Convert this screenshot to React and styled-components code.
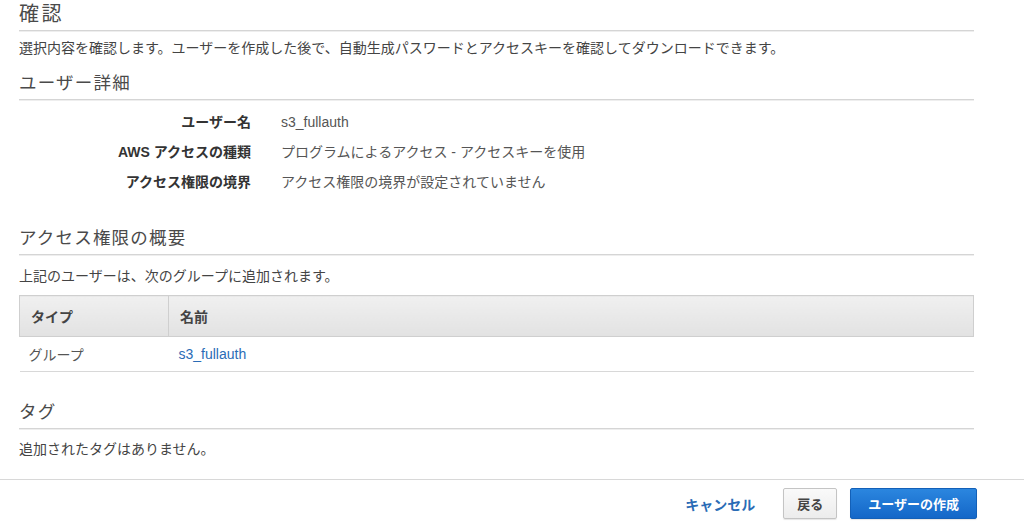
import React from "react";
import styled, { createGlobalStyle } from "styled-components";

const Global = createGlobalStyle`
  html, body { margin: 0; padding: 0; background: #fff; }
  body { font-family: "Liberation Sans", Arial, "Noto Sans CJK JP", sans-serif; color: #444; }
  * { box-sizing: border-box; }
`;

const Page = styled.div`
  width: 1024px;
  height: 525px;
  overflow: hidden;
  display: flex;
  flex-direction: column;
`;

const Content = styled.div`
  width: 974px;
  padding-left: 19px;
  display: flex;
  flex-direction: column;
`;

const Heading = styled.h2`
  margin: 0;
  font-weight: 400;
  font-size: ${(p) => (p.$big ? "20px" : "17.5px")};
  letter-spacing: ${(p) => (p.$big ? "2.5px" : "1.2px")};
  line-height: ${(p) => (p.$big ? "28px" : "22px")};
  color: #4a4a4a;
  padding-top: ${(p) => p.$top || 0}px;
  padding-bottom: ${(p) => (p.$big ? 2 : 5)}px;
  border-bottom: 1px solid #d5d5d5;
  box-shadow: 0 1px 0 #eeeeee;
`;

const Text = styled.p`
  margin: 0;
  font-size: 14px;
  line-height: 16px;
  color: #444;
  padding-top: ${(p) => p.$top || 0}px;
`;

const DetailList = styled.dl`
  margin: 14px 0 0;
  display: grid;
  grid-template-columns: 232px 1fr;
  column-gap: 30px;
  row-gap: 14px;
  font-size: 14px;
  line-height: 16px;
`;

const Term = styled.dt`
  text-align: right;
  font-weight: 700;
  color: #333;
`;

const Desc = styled.dd`
  margin: 0;
  color: #555;
`;

const Table = styled.table`
  margin-top: 11px;
  width: 955px;
  border-collapse: collapse;
  font-size: 14px;
`;

const Th = styled.th`
  height: 41px;
  text-align: left;
  font-weight: 700;
  color: #444;
  padding: 0 0 0 ${(p) => p.$pl || 11}px;
  background: linear-gradient(#f0f0f0, #e2e2e2);
  border: 1px solid #cfcfcf;
  border-left: ${(p) => (p.$first ? "1px solid #cfcfcf" : "1px solid #d8d8d8")};
  width: ${(p) => p.$w || "auto"};
`;

const Td = styled.td`
  height: 35px;
  padding: 0 0 0 ${(p) => p.$pl || 9}px;
  color: #555;
  border-bottom: 1px solid #d8d8d8;
`;

const Link = styled.a`
  color: #2a6cb6;
  text-decoration: none;
`;

const Footer = styled.div`
  margin-top: 22px;
  border-top: 1px solid #d8d8d8;
  display: flex;
  justify-content: flex-end;
  align-items: center;
  gap: 13px;
  padding: 8px 47px 0 0;
`;

const TextButton = styled.button`
  background: none;
  border: none;
  font-family: inherit;
  font-size: 14px;
  font-weight: 700;
  color: #2a6cb6;
  padding: 0;
  margin-right: 15px;
`;

const Button = styled.button`
  height: 31px;
  padding: 0 ${(p) => (p.$primary ? 17 : 13)}px;
  font-family: inherit;
  font-size: 13px;
  font-weight: 700;
  border-radius: 2px;
  border: 1px solid ${(p) => (p.$primary ? "#1360b8" : "#c4c4c4")};
  color: ${(p) => (p.$primary ? "#fff" : "#444")};
  background: ${(p) =>
    p.$primary
      ? "linear-gradient(#2b86df, #1467c8)"
      : "linear-gradient(#fafafa, #ececec)"};
  box-shadow: 0 1px 1px rgba(0,0,0,0.1);
`;

export default function App() {
  return (
    <Page>
      <Global />
      <Content>
        <Heading $big>確認</Heading>
        <Text $top={9}>
          選択内容を確認します。ユーザーを作成した後で、自動生成パスワードとアクセスキーを確認してダウンロードできます。
        </Text>
        <Heading $top={16}>ユーザー詳細</Heading>
        <DetailList>
          <Term>ユーザー名</Term>
          <Desc>s3_fullauth</Desc>
          <Term>AWS アクセスの種類</Term>
          <Desc>プログラムによるアクセス - アクセスキーを使用</Desc>
          <Term>アクセス権限の境界</Term>
          <Desc>アクセス権限の境界が設定されていません</Desc>
        </DetailList>
        <Heading $top={37}>アクセス権限の概要</Heading>
        <Text $top={13}>上記のユーザーは、次のグループに追加されます。</Text>
        <Table>
          <thead>
            <tr>
              <Th $first $w="149px">タイプ</Th>
              <Th $pl={11}>名前</Th>
            </tr>
          </thead>
          <tbody>
            <tr>
              <Td>グループ</Td>
              <Td $pl={10}><Link href="#">s3_fullauth</Link></Td>
            </tr>
          </tbody>
        </Table>
        <Heading $top={29}>タグ</Heading>
        <Text $top={12}>追加されたタグはありません。</Text>
      </Content>
      <Footer>
        <TextButton>キャンセル</TextButton>
        <Button>戻る</Button>
        <Button $primary>ユーザーの作成</Button>
      </Footer>
    </Page>
  );
}
